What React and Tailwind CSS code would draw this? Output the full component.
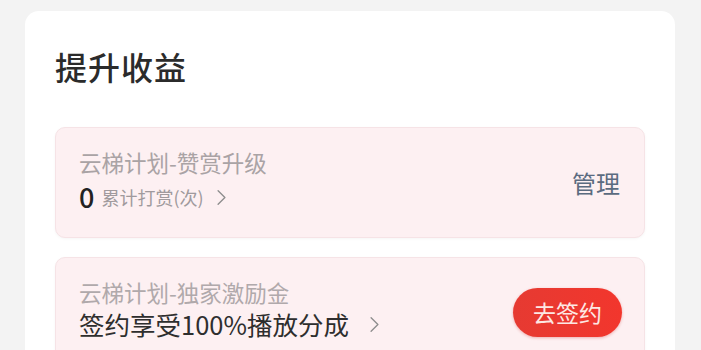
import React from "react";

const Chevron = ({ className }) => (
  <svg className={className} viewBox="0 0 12 20" fill="none" stroke="currentColor" strokeWidth="1.6" strokeLinecap="round" strokeLinejoin="round">
    <path d="M2 2l8 8-8 8" />
  </svg>
);

const App = () => {
  return (
    <div
      className="w-[701px] h-[350px] overflow-hidden bg-[#f3f3f3] pt-[11px] pl-[25px] pr-[26px]"
      style={{ fontFamily: '"Noto Sans CJK SC", "Noto Sans", sans-serif' }}
    >
      <div className="bg-white rounded-t-[14px] h-[400px] pt-[35px] px-[30px]">
        <h2 className="text-[32px] leading-[40px] font-medium text-[#2b2b2b] tracking-[1px]">提升收益</h2>

        <div className="mt-[41px] h-[111px] rounded-[10px] bg-[#fdf0f2] border border-[#f6e3e6] shadow-[0_1px_3px_rgba(0,0,0,0.04)] flex items-start justify-between pl-[23px] pr-[24px] pt-[19px]">
          <div className="flex flex-col">
            <div className="text-[22.5px] leading-[30px] text-[#aaa3a5]">云梯计划-赞赏升级</div>
            <div className="flex items-center mt-[3px]">
              <span className="text-[27px] leading-[34px] font-medium text-[#222]">0</span>
              <span className="ml-[7px] text-[18px] text-[#a09a9d]">累计打赏(次)</span>
              <Chevron className="ml-[12px] w-[11px] h-[17px] text-[#8e8e8e]" />
            </div>
          </div>
          <div className="text-[24px] leading-[32px] text-[#5b6b80] mt-[20px]">管理</div>
        </div>

        <div className="mt-[19px] h-[111px] rounded-[10px] bg-[#fdf0f2] border border-[#f6e3e6] shadow-[0_1px_3px_rgba(0,0,0,0.04)] flex items-start justify-between pl-[23px] pr-[22px] pt-[19px]">
          <div className="flex flex-col">
            <div className="text-[22.5px] leading-[30px] text-[#b0a9ab]">云梯计划-独家激励金</div>
            <div className="flex items-center">
              <span className="text-[25.5px] leading-[34px] text-[#2e2e2e]">签约享受100%播放分成</span>
              <Chevron className="ml-[20px] w-[11px] h-[17px] text-[#8e8e8e]" />
            </div>
          </div>
          <button className="mt-[11px] w-[109px] h-[49px] rounded-full bg-gradient-to-r from-[#e63a32] to-[#f2362d] text-[23px] text-[#fde8e4] shadow-[0_1px_3px_rgba(200,30,30,0.3)]">
            去签约
          </button>
        </div>
      </div>
    </div>
  );
};

export default App;
